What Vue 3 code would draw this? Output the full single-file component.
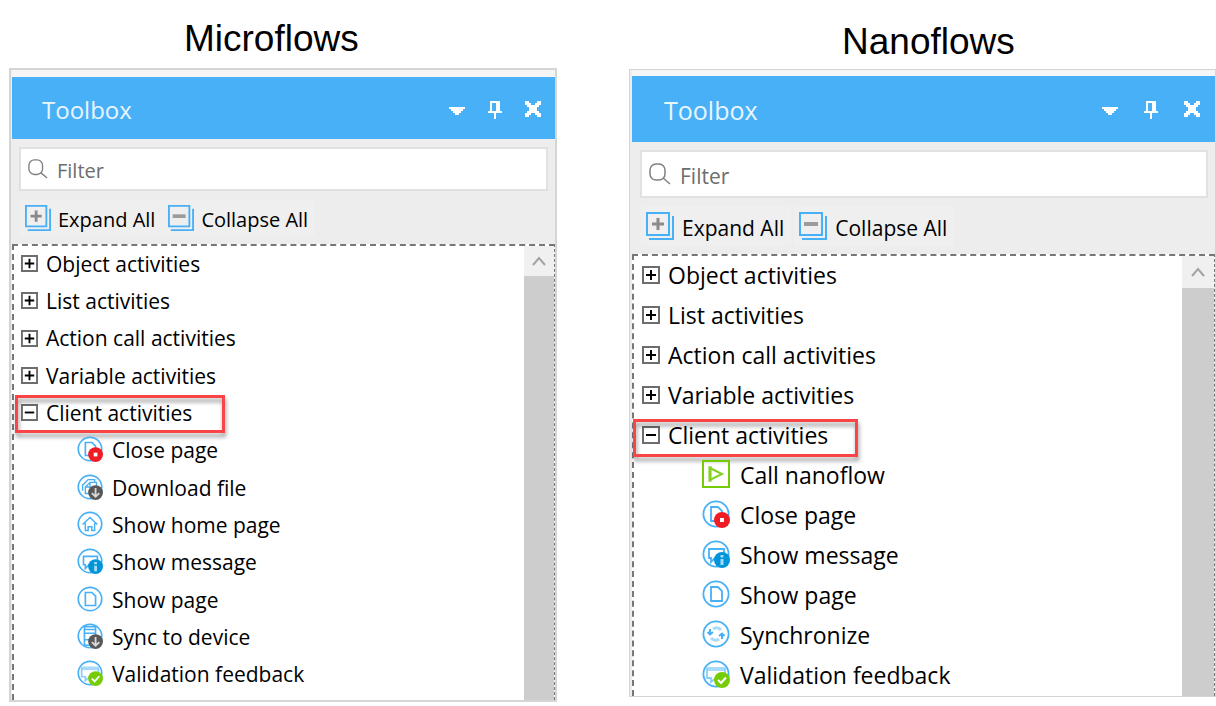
<script setup>
const closedGroups = ['Object activities', 'List activities', 'Action call activities', 'Variable activities']

const panels = [
  {
    id: 'micro',
    title: 'Microflows',
    items: [
      { label: 'Close page', shape: 'page', badge: 'stop' },
      { label: 'Download file', shape: 'files', badge: 'down' },
      { label: 'Show home page', shape: 'home' },
      { label: 'Show message', shape: 'message', badge: 'info' },
      { label: 'Show page', shape: 'page' },
      { label: 'Sync to device', shape: 'device', badge: 'down' },
      { label: 'Validation feedback', shape: 'feedback', badge: 'check' }
    ]
  },
  {
    id: 'nano',
    title: 'Nanoflows',
    items: [
      { label: 'Call nanoflow', shape: 'play' },
      { label: 'Close page', shape: 'page', badge: 'stop' },
      { label: 'Show message', shape: 'message', badge: 'info' },
      { label: 'Show page', shape: 'page' },
      { label: 'Synchronize', shape: 'sync' },
      { label: 'Validation feedback', shape: 'feedback', badge: 'check' }
    ]
  }
]

const badgeColors = { stop: '#ee1c25', down: '#58585a', info: '#0095db', check: '#76cc06' }
</script>

<template>
  <main class="page">
    <section v-for="panel in panels" :key="panel.id" class="column" :class="panel.id">
      <h2 class="title">{{ panel.title }}</h2>
      <div class="panel">
        <header class="bar">
          <span class="bar-name">Toolbox</span>
          <button class="bar-btn" type="button" aria-label="Options">
            <svg viewBox="0 0 16 18"><path d="M0 6h16v2h-2v2h-2v2h-2v2H6v-2H4v-2H2V8H0z" fill="#fff" /></svg>
          </button>
          <button class="bar-btn" type="button" aria-label="Pin">
            <svg viewBox="0 0 16 18"><path d="M3 0h10v10h2v2H9v6H7v-6H1v-2h2zM5 2v8h4V2z" fill="#fff" fill-rule="evenodd" /></svg>
          </button>
          <button class="bar-btn" type="button" aria-label="Close">
            <svg viewBox="0 0 16 18"><path d="M0 0h4v2h2v2h4V2h2V0h4v4h-2v2h-2v4h2v2h2v4h-4v-2h-2v-2H6v2H4v2H0v-4h2v-2h2V6H2V4H0z" fill="#fff" /></svg>
          </button>
        </header>

        <label class="filter">
          <svg class="lens" viewBox="0 0 22 22" fill="none" stroke="#808080" stroke-width="1.5">
            <rect x="1" y="1" width="15" height="16" rx="6" />
            <path d="M14 15l7 6" />
          </svg>
          <input class="filter-input" type="text" placeholder="Filter" aria-label="Filter" />
        </label>

        <div class="tools">
          <button class="tool" type="button">
            <svg class="tool-icon" viewBox="0 0 28 28" fill="none">
              <path d="M1 1h22v22H1zM27 4v23H3" stroke="#48b0f7" stroke-width="2" />
              <path d="M12 6v12M6 12h12" stroke="#8a8a8a" stroke-width="3" />
            </svg>
            <span class="tool-text">Expand All</span>
          </button>
          <button class="tool" type="button">
            <svg class="tool-icon" viewBox="0 0 28 28" fill="none">
              <path d="M1 1h22v22H1zM27 4v23H3" stroke="#48b0f7" stroke-width="2" />
              <path d="M5 12h14" stroke="#9c9c9c" stroke-width="4" />
            </svg>
            <span class="tool-text">Collapse All</span>
          </button>
        </div>

        <div class="tree-box">
          <ul class="tree">
            <li v-for="group in closedGroups" :key="group" class="row">
              <button class="group" type="button" aria-expanded="false">
                <svg class="toggle" viewBox="0 0 18 18" fill="none">
                  <path d="M1 1h16v16H1z" stroke="#6d6d6d" stroke-width="2" />
                  <path d="M9 4v10M4 9h10" stroke="#000" stroke-width="2" />
                </svg>
                <span>{{ group }}</span>
              </button>
            </li>
            <li class="row marked">
              <button class="group" type="button" aria-expanded="true">
                <svg class="toggle" viewBox="0 0 18 18" fill="none">
                  <path d="M1 1h16v16H1z" stroke="#6d6d6d" stroke-width="2" />
                  <path d="M4 9h10" stroke="#000" stroke-width="2" />
                </svg>
                <span>Client activities</span>
              </button>
            </li>
            <li v-for="item in panel.items" :key="item.label" class="row item">
              <svg class="icon" viewBox="0 0 28 28" fill="none" stroke="#48b0f7" stroke-width="1.8">
                <template v-if="item.shape === 'play'">
                  <path d="M1 1h26v26H1z" stroke="#76cc06" stroke-width="2" />
                  <path d="M6 6h4v16H6z" fill="#bbe683" stroke="none" />
                  <path d="M8 8l12 6-12 6z" stroke="#84d020" stroke-width="2" />
                </template>
                <template v-else>
                  <circle cx="14" cy="14" r="12.6" fill="#fff" />
                  <path v-if="item.shape === 'page'" d="M9 7h7l4 4v10H9z" />
                  <g v-else-if="item.shape === 'files'" stroke-width="1.5">
                    <path d="M6 18v-6l6-6h7v3" />
                    <path d="M9 21v-7l5-5h7v12zM9 14h5V9" />
                  </g>
                  <path v-else-if="item.shape === 'home'" d="M6 14.500L14 7l8 7.500M9 13v8h3v-4h4v4h3v-8" stroke-width="1.600" />
                  <path v-else-if="item.shape === 'message'" d="M7 9h15v9h-9l-4 4v-4H7z" />
                  <g v-else-if="item.shape === 'device'">
                    <path d="M8 4h12v20H8z" />
                    <path d="M8 7h12M8 11h12M8 18h12" stroke-width="1.500" />
                  </g>
                  <g v-else-if="item.shape === 'feedback'">
                    <path d="M5 7h18v4H5z" fill="#a9dafb" stroke="none" />
                    <path d="M5 8v10h4v4l5-4h9V8" stroke="#8bcdfa" />
                  </g>
                  <g v-else-if="item.shape === 'sync'">
                    <path d="M11 9q4-3 8 1M17 19q-4 3-8-1" stroke="#a9dafb" stroke-width="3" />
                    <path d="M8 9v4M5.500 12l2.500 2.500 3-2.500M20 19v-4M22.500 16L20 13.500 17 16" stroke-width="2" />
                  </g>
                </template>
                <g v-if="item.badge" stroke="none">
                  <circle cx="20" cy="20" r="8" :fill="badgeColors[item.badge]" />
                  <path v-if="item.badge === 'stop'" d="M18 18h4v4h-4z" fill="#fff" />
                  <path v-else-if="item.badge === 'info'" d="M18.500 15h3v2.500h-3zM18.500 19h3v6h-3z" fill="#a6dbf4" />
                  <path v-else-if="item.badge === 'down'" d="M20 15v9M16 20.500l4 4 4-4" fill="none" stroke="#d8d8d8" stroke-width="2" />
                  <path v-else d="M16 20l3 3 5-5.500" fill="none" stroke="#fff" stroke-width="2" />
                </g>
              </svg>
              <span>{{ item.label }}</span>
            </li>
          </ul>
          <div class="scroll">
            <button class="scroll-up" type="button" aria-label="Scroll up">
              <svg class="chevron" viewBox="0 0 14 12"><path d="M1 10l6-7 6 7" fill="none" stroke="#a3a3a3" stroke-width="2" /></svg>
            </button>
            <div class="thumb"></div>
          </div>
        </div>
      </div>
    </section>
  </main>
</template>

<style>
body {
  background: #fff;
}
</style>

<style scoped>
.page {
  display: grid;
  grid-template-columns: 548fr 587fr;
  gap: 72px;
  align-items: start;
  padding-left: 9px;
  font-family: "Open Sans", "Noto Sans", sans-serif;
  color: #000;
}
button {
  font: inherit;
  color: inherit;
  background: none;
  border: 0;
  padding: 0;
  text-align: left;
}
svg {
  display: block;
  flex: none;
}
.column {
  --text: 21px;
  --text-tool: 20px;
  --text-bar: 24px;
  --bar: 58px;
  --bar-gap: 22px;
  --field: 44px;
  --icon: 26px;
  --toggle: 17px;
  --frame: 2px;
  --scroll: 30px;
  --tree: 448px;
  padding-top: 19px;
}
.nano {
  --text: 23px;
  --text-tool: 21px;
  --text-bar: 25px;
  --bar: 64px;
  --bar-gap: 25px;
  --field: 48px;
  --icon: 28px;
  --toggle: 18px;
  --frame: 1px;
  --scroll: 32px;
  --tree: 440px;
  padding-top: 22px;
}
.title {
  margin: 0 0 9px;
  padding-left: 175px;
  font: 400 37px/40px "Liberation Sans", Arial, sans-serif;
  color: #000;
}
.nano .title {
  margin-bottom: 7px;
  padding-left: 213px;
}
.panel {
  border: var(--frame) solid #d5d5d5;
  background: #ededed;
  font-size: var(--text);
  line-height: 30px;
}
.bar {
  display: flex;
  align-items: center;
  gap: var(--bar-gap);
  height: var(--bar);
  margin-left: 1px;
  padding: 4px 14px 0 30px;
  background: #48b0f7;
  border-top: 7px solid #f5f5f5;
  color: #e9f6ff;
}
.nano .bar {
  margin-left: 2px;
  border-top-width: 6px;
  padding: 2px 15px 0 32px;
}
.bar-name {
  flex: 1;
  font-size: var(--text-bar);
}
.bar-btn svg {
  width: 16px;
  height: 18px;
}
.filter {
  display: flex;
  align-items: center;
  gap: 9px;
  height: var(--field);
  margin: 8px 7px 8px 8px;
  padding-left: 7px;
  background: #fff;
  border: 2px solid #e1e1e1;
  box-sizing: border-box;
}
.nano .filter {
  margin-left: 10px;
}
.lens {
  width: 20px;
  height: 20px;
}
.nano .lens {
  width: 22px;
  height: 22px;
}
.filter-input {
  flex: 1;
  min-width: 0;
  border: 0;
  padding: 3px 0 0;
  outline: 0;
  background: none;
  font: inherit;
  font-size: var(--text-tool);
}
.filter-input::placeholder {
  color: #6d6d6d;
  opacity: 1;
}
.tools {
  display: flex;
  gap: 1px;
  margin: 0 0 8px 9px;
  font-size: var(--text-tool);
}
.nano .tools {
  margin-left: 11px;
  gap: 3px;
}
.tool {
  display: flex;
  align-items: center;
  gap: 7px;
  height: 37px;
  padding: 0 7px 0 5px;
  background: #efefef;
}
.nano .tool {
  height: 40px;
  gap: 8px;
}
.tool-icon {
  width: var(--icon);
  height: var(--icon);
}
.tool-text {
  padding-top: 4px;
}
.tree-box {
  display: flex;
  margin-left: 1px;
  background: #fff;
  border: 2px dashed #777;
  border-right-width: 1px;
  border-bottom: 0;
}
.nano .tree-box {
  margin-left: 2px;
}
.tree {
  flex: 1;
  display: grid;
  grid-auto-rows: 1fr;
  min-height: var(--tree);
  margin: 0;
  padding: 0 0 6px;
  list-style: none;
}
.nano .tree {
  padding-bottom: 0;
}
.row {
  position: relative;
  display: flex;
  align-items: center;
  padding: 0 0 2px 7px;
}
.nano .row {
  padding-left: 8px;
}
.group {
  display: flex;
  align-items: center;
  gap: 8px;
}
.toggle {
  width: var(--toggle);
  height: var(--toggle);
}
.marked::after {
  content: "";
  position: absolute;
  left: 1px;
  top: 0;
  bottom: 0;
  width: 204px;
  border: 3px solid #fa4446;
  filter: drop-shadow(1px 4px 2px rgba(0, 0, 0, 0.4));
}
.nano .marked::after {
  left: -1px;
  top: 3px;
  bottom: -1px;
  width: 219px;
}
.item {
  gap: 9px;
}
.micro .item {
  padding-left: 63px;
}
.nano .item {
  gap: 10px;
  padding-left: 68px;
}
.icon {
  width: var(--icon);
  height: var(--icon);
  margin-bottom: 2px;
}
.scroll {
  display: flex;
  flex-direction: column;
  width: var(--scroll);
}
.scroll-up {
  display: flex;
  align-items: center;
  justify-content: center;
  height: var(--scroll);
  background: #f0f0f0;
}
.chevron {
  width: 14px;
  height: 12px;
}
.thumb {
  flex: 1;
  background: #cdcdcd;
}
</style>
